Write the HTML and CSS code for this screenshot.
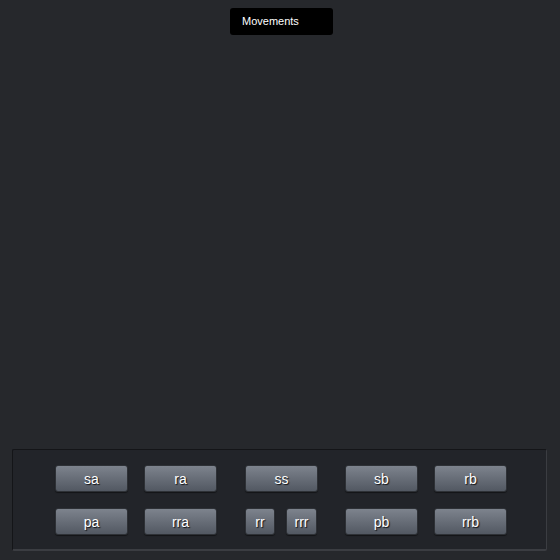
FILE: index.html
```html
<!DOCTYPE html>
<html>
<head>
<meta charset="utf-8">
<link rel="stylesheet" href="styles.css">
</head>
<body>
<div class="page">
  <div class="title">Movements</div>
  <div class="panel">
    <div class="row">
      <div class="group"><button class="btn">sa</button><button class="btn">ra</button></div>
      <div class="group mid"><button class="btn">ss</button></div>
      <div class="group"><button class="btn">sb</button><button class="btn">rb</button></div>
    </div>
    <div class="row">
      <div class="group"><button class="btn">pa</button><button class="btn">rra</button></div>
      <div class="group mid split"><button class="btn small">rr</button><button class="btn small">rrr</button></div>
      <div class="group"><button class="btn">pb</button><button class="btn">rrb</button></div>
    </div>
  </div>
</div>
</body>
</html>
```
FILE: styles.css
```css
html, body {
  margin: 0;
  padding: 0;
  background: #26282c;
  font-family: "Liberation Sans", Arial, sans-serif;
}
.page {
  height: 560px;
  display: flex;
  flex-direction: column;
}
.title {
  margin: 8px 0 0 230px;
  width: 91px;
  height: 27px;
  padding-left: 12px;
  background: #000;
  border-radius: 3px;
  color: #fff;
  font-size: 11px;
  line-height: 26px;
  box-sizing: content-box;
}
.panel {
  margin: auto 13px 9px 12px;
  height: 102px;
  box-sizing: border-box;
  background: #222429;
  border-top: 1px solid #141518;
  border-left: 1px solid #141518;
  border-right: 1px solid #3b3d42;
  border-bottom: 2px solid #3b3d42;
  border-radius: 2px;
  padding: 15px 0 0 42px;
  display: flex;
  flex-direction: column;
  gap: 16px;
}
.row {
  display: flex;
}
.group {
  display: flex;
  gap: 16px;
}
.group.mid {
  margin: 0 27px 0 28px;
  width: 73px;
}
.group.split {
  gap: 11px;
}
.btn {
  width: 73px;
  height: 27px;
  padding: 0;
  border: 1px solid #2e3136;
  border-radius: 3px;
  background: linear-gradient(#7d838d, #525862);
  box-shadow: 0 1px 1px rgba(0,0,0,0.45);
  color: #fff;
  font-family: "Liberation Sans", Arial, sans-serif;
  font-size: 14px;
  text-shadow: 1px 1px 1px #111215;
}
.btn.small {
  width: 31px;
}
.group.split .btn.small:first-child {
  width: 30px;
}
```
